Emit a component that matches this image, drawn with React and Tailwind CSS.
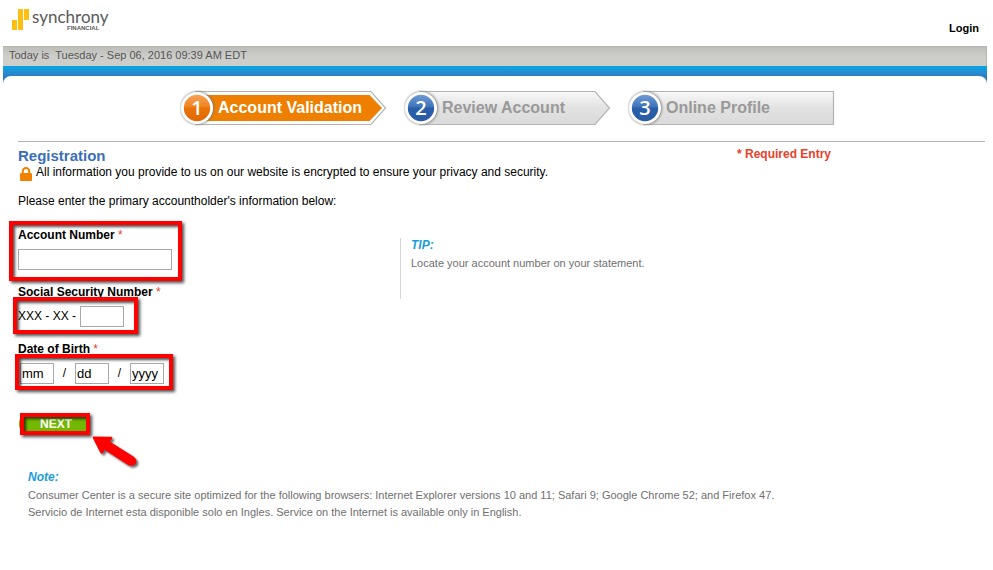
import { useState } from 'react';
import clsx from 'clsx';

const STEPS = [
  { number: '1', title: 'Account Validation', active: true },
  { number: '2', title: 'Review Account' },
  { number: '3', title: 'Online Profile', last: true },
];

const Logo = () => (
  <svg width="110" height="34" viewBox="0 -5 110 34" role="img" aria-label="Synchrony Financial">
    <g fill="#fdc010">
      <rect x="0" y="11" width="5" height="10" />
      <rect x="6" y="0" width="5" height="21" />
      <rect x="12" y="0" width="5" height="11" />
    </g>
    <text x="20" y="14" fontSize="17" fill="#58595b" fontFamily="Lato, sans-serif">
      synchrony
    </text>
    <text x="55" y="21" fontSize="6" fontWeight="700" fill="#58595b" fontFamily="'Liberation Sans', sans-serif">
      FINANCIAL
    </text>
  </svg>
);

const Lock = () => (
  <svg width="12" height="14" viewBox="0 0 12 14" aria-hidden="true">
    <path d="M2.8 7V4.2a3.2 3.2 0 0 1 6.4 0V7" fill="none" stroke="#f08200" strokeWidth="2" />
    <rect x="0" y="6" width="12" height="8" rx="1" fill="#f08200" />
  </svg>
);

const StepShape = ({ number, active, last }) => {
  const outline = last ? 'M16 1.5H205.5V34.5H16z' : 'M16 1.5H191L205.5 18L191 34.5H16z';

  return (
    <svg width="208" height="36" viewBox="0 0 208 36" className="[grid-area:1/1]" aria-hidden="true">
      <defs>
        <linearGradient id={`bar-${number}`} x1="0" y1="0" x2="0" y2="1">
          <stop offset="0" stopColor="#f8f8f8" />
          <stop offset="0.5" stopColor="#e2e2e2" />
          <stop offset="1" stopColor="#dadada" />
        </linearGradient>
        <linearGradient id={`ball-${number}`} x1="0" y1="0" x2="0" y2="1">
          <stop offset="0" stopColor={active ? '#f5a355' : '#6f9bd2'} />
          <stop offset="0.45" stopColor={active ? '#ef8420' : '#3f74bb'} />
          <stop offset="0.5" stopColor={active ? '#e97208' : '#2a5ea8'} />
          <stop offset="1" stopColor={active ? '#e26a04' : '#2a5ca6'} />
        </linearGradient>
        <filter id={`soft-${number}`} x="-20%" y="-20%" width="140%" height="140%">
          <feGaussianBlur stdDeviation="0.8" />
        </filter>
      </defs>
      <path d={outline} fill={active ? '#fff' : `url(#bar-${number})`} stroke="#b4b4b4" strokeWidth="1.2" />
      {active && <path d="M18 5H189.5L202 18L189.5 31H18z" fill="#ee7f00" />}
      <circle cx="17.5" cy="18" r="16.8" fill="#777" opacity="0.7" filter={`url(#soft-${number})`} />
      <circle cx="17" cy="18" r="16" fill="#fff" />
      <circle cx="17" cy="18" r="13.2" fill={`url(#ball-${number})`} />
      <text
        x="17"
        y="25"
        textAnchor="middle"
        fontSize="20"
        fontWeight="600"
        fill="#fff"
        fontFamily="'Open Sans', sans-serif"
      >
        {number}
      </text>
    </svg>
  );
};

const Step = ({ number, title, active, last }) => (
  <li className="grid items-center" aria-current={active ? 'step' : undefined}>
    <StepShape number={number} active={active} last={last} />
    <span
      className={clsx(
        'pl-[38px] text-base leading-5 font-bold [grid-area:1/1]',
        active ? 'text-white' : 'text-[#999999]'
      )}
    >
      {title}
    </span>
  </li>
);

// Red frame drawn over a field to call attention to it
const Highlight = ({ className }) => (
  <div
    aria-hidden="true"
    className={clsx('pointer-events-none absolute border-4 border-[#fe0000]', className)}
  >
    <div className="h-full w-full shadow-[inset_2px_2px_3px_rgba(0,0,0,0.7)]" />
  </div>
);

const Arrow = () => (
  <svg
    width="52"
    height="38"
    viewBox="0 0 52 38"
    aria-hidden="true"
    className="pointer-events-none absolute top-5 left-[74px] drop-shadow-[2px_2px_1px_rgba(0,0,0,0.6)]"
  >
    <path
      d="M1.5 1.6L19.5 1.8Q21 2.4 20 4L17.6 6.6L41.5 21.4Q46 25 43.5 29Q40.5 32 36 30L12.6 14.8L10.4 18.4Q9.2 19.4 8.2 17.6L0.8 3Q0.4 1.8 1.5 1.6Z"
      fill="#fe0000"
    />
  </svg>
);

const Label = ({ htmlFor, children }) => (
  <label htmlFor={htmlFor} className="block leading-4 font-bold">
    {children} <span className="font-normal text-[#e8402a]">*</span>
  </label>
);

const inputClass = 'h-[21px] border border-[#a9a9a9] bg-white px-px text-[13px]';

const App = () => {
  const [form, setForm] = useState({ account: '', ssn: '', month: 'mm', day: 'dd', year: 'yyyy' });

  const handleChange = (e) => {
    setForm({ ...form, [e.target.name]: e.target.value });
  };

  const handleSubmit = (e) => {
    e.preventDefault();
  };

  return (
    <div className="min-h-screen bg-white pr-[6px] pl-[3px] font-['Liberation_Sans',Arial,sans-serif] text-xs text-black">
      {/* Header */}
      <header className="flex h-[46px] justify-between pt-1 pr-2 pl-[9px]">
        <Logo />
        <a href="#login" className="pt-4 text-[11px] leading-4 font-bold">
          Login
        </a>
      </header>

      <div className="h-5 border-t border-r border-[#b4b4b0] bg-linear-to-b from-[#bdbdba] to-[#cdcec9] to-50% pl-[6px] text-[11px] leading-4 whitespace-pre text-[#555555]">
        Today is  Tuesday - Sep 06, 2016 09:39 AM EDT
      </div>

      <div className="bg-linear-to-b from-[#00a6e5] to-[#2f78c0] to-[12px] pt-[10px]">
        <main className="rounded-t-lg bg-white pt-[14px] pr-[2px] pl-[15px]">
          <ol className="flex gap-4 pl-[162px]">
            {STEPS.map((step) => (
              <Step key={step.number} {...step} />
            ))}
          </ol>

          <div className="mt-[15px] flex justify-between border-t border-[#b3b3b3] pt-[6px]">
            <div>
              <h1 className="text-[15px] leading-4 font-bold text-[#3a6fb7]">Registration</h1>
              <p className="flex gap-1 pl-[2px] leading-4">
                <span className="pt-[3px]">
                  <Lock />
                </span>
                All information you provide to us on our website is encrypted to ensure your privacy and security.
              </p>
            </div>
            <p className="pr-[154px] leading-3 font-bold text-[#e8402a]">* Required Entry</p>
          </div>

          <p className="mt-3 leading-4">Please enter the primary accountholder&apos;s information below:</p>

          {/* Form + tip */}
          <div className="mt-[18px] flex items-start">
            <form onSubmit={handleSubmit} className="flex w-[382px] flex-col gap-[14px]">
              <div className="relative flex flex-col items-start gap-[6px]">
                <Label htmlFor="account">Account Number</Label>
                <input
                  id="account"
                  name="account"
                  value={form.account}
                  onChange={handleChange}
                  className={clsx(inputClass, 'w-[154px]')}
                />
                <Highlight className="-top-[6px] -left-[9px] h-[60px] w-[173px] shadow-[2px_2px_3px_rgba(0,0,0,0.7)]" />
              </div>

              <div className="relative flex flex-col items-start gap-[6px]">
                <Label htmlFor="ssn">Social Security Number</Label>
                <div className="flex items-start gap-1">
                  <span className="leading-5">XXX - XX -</span>
                  <input
                    id="ssn"
                    name="ssn"
                    value={form.ssn}
                    onChange={handleChange}
                    maxLength={4}
                    className={clsx(inputClass, 'w-11')}
                  />
                </div>
                <Highlight className="top-[13px] -left-[5px] h-[37px] w-[125px] shadow-[2px_2px_3px_rgba(0,0,0,0.7)]" />
              </div>

              <div className="relative flex flex-col items-start gap-[6px]">
                <Label htmlFor="month">Date of Birth</Label>
                <div className="flex items-start pl-[2px]">
                  <input
                    id="month"
                    name="month"
                    aria-label="Month"
                    value={form.month}
                    onChange={handleChange}
                    className={clsx(inputClass, 'w-[34px]')}
                  />
                  <span className="w-[21px] text-center leading-5">/</span>
                  <input
                    name="day"
                    aria-label="Day"
                    value={form.day}
                    onChange={handleChange}
                    className={clsx(inputClass, 'w-[34px]')}
                  />
                  <span className="w-[21px] text-center leading-5">/</span>
                  <input
                    name="year"
                    aria-label="Year"
                    value={form.year}
                    onChange={handleChange}
                    className={clsx(inputClass, 'w-[34px]')}
                  />
                </div>
                <Highlight className="top-[13px] -left-[3px] h-[36px] w-[158px] shadow-[2px_2px_3px_rgba(0,0,0,0.7)]" />
              </div>

              <div className="relative mt-[17px] pl-px">
                <button
                  type="submit"
                  className="block h-[18px] w-[70px] rounded-lg bg-[#72b800] pl-1 text-center leading-[18px] font-bold text-white"
                >
                  NEXT
                </button>
                <Highlight className="-top-[2px] left-[2px] h-[22px] w-[70px] shadow-[2px_2px_3px_rgba(0,0,0,0.7)]" />
                <Arrow />
              </div>
            </form>

            <aside className="mt-[11px] h-[61px] border-l border-[#d5d6d8] pl-[10px]">
              <h2 className="leading-[14px] font-bold text-[#1b9ddb] italic">TIP:</h2>
              <p className="pt-[2px] text-[11px] leading-[18px] text-[#6f6f6f]">
                Locate your account number on your statement.
              </p>
            </aside>
          </div>

          {/* Browser note */}
          <footer className="mt-[36px] pl-[10px]">
            <h2 className="leading-4 font-bold text-[#1b9ddb] italic">Note:</h2>
            <p className="pt-[2px] text-[11px] leading-[17px] text-[#6f6f6f]">
              Consumer Center is a secure site optimized for the following browsers: Internet Explorer versions 10 and
              11; Safari 9; Google Chrome 52; and Firefox 47.
              <br />
              Servicio de Internet esta disponible solo en Ingles. Service on the Internet is available only in English.
            </p>
          </footer>
        </main>
      </div>
    </div>
  );
};

export default App;
